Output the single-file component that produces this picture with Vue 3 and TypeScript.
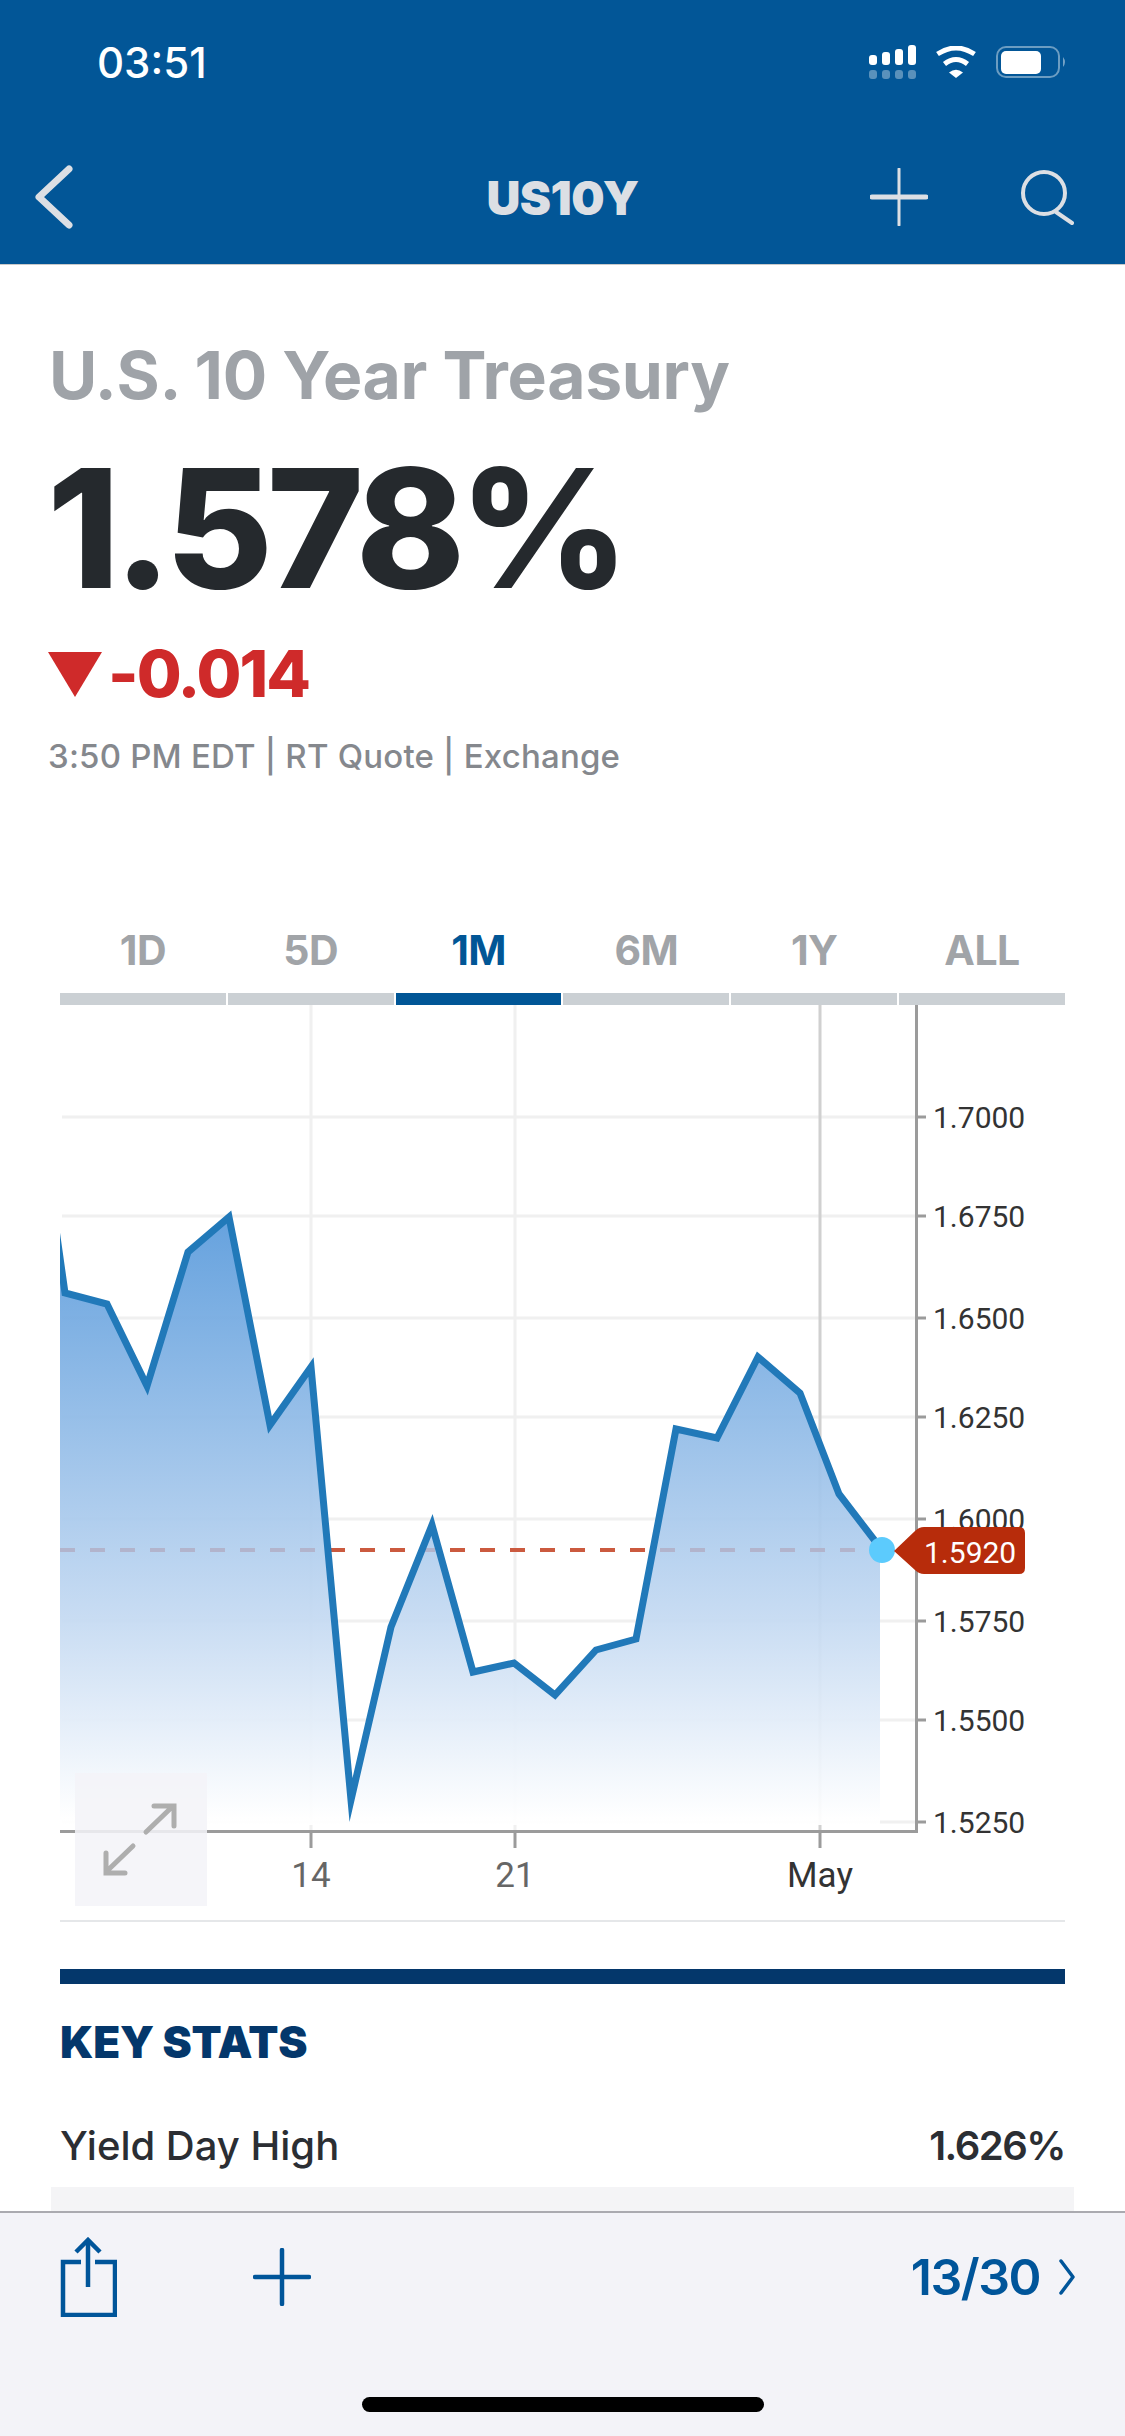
<template>
  <div class="screen">
    <header class="top">
      <div class="status">
        <span class="time">03:51</span>
        <div class="status-icons">
          <svg class="signal" width="47" height="34" viewBox="0 0 47 34">
            <rect v-for="b in signalBars" :key="b.x" :x="b.x" :y="b.y" width="8" :height="20 - b.y" rx="3" fill="#fff" />
            <rect v-for="b in signalBars" :key="'r' + b.x" :x="b.x" y="25" width="8" height="9" rx="3" fill="#fff" opacity="0.35" />
          </svg>
          <svg class="wifi" width="42" height="32" viewBox="0 0 42 32">
            <path d="M2.5 8Q21 -4 39.5 8" fill="none" stroke="#fff" stroke-width="5" />
            <path d="M9.5 18Q21 9 32.5 18" fill="none" stroke="#fff" stroke-width="5" />
            <path d="M14 26.5Q21 21 28 26.5L21 32Z" fill="#fff" />
          </svg>
          <svg class="battery" width="71" height="32" viewBox="0 0 71 32">
            <rect x="1" y="1" width="62" height="30" rx="9" fill="none" stroke="#fff" stroke-opacity="0.42" stroke-width="2" />
            <rect x="5" y="5" width="40" height="23" rx="5" fill="#fff" />
            <path d="M67 11Q71 16 67 21Z" fill="#fff" opacity="0.45" />
          </svg>
        </div>
      </div>
      <nav class="nav">
        <div class="nav-left">
          <svg width="42" height="66" viewBox="0 0 42 66">
            <path d="M36 5L6 33L36 61" fill="none" stroke="#dcdfe4" stroke-width="7" stroke-linecap="round" stroke-linejoin="round" />
          </svg>
        </div>
        <div class="symbol">US10Y</div>
        <div class="nav-right">
          <svg width="58" height="58" viewBox="0 0 58 58">
            <path d="M29 1V57" stroke="#dcdfe4" stroke-width="3" stroke-linecap="round" />
            <path d="M2 29H56" stroke="#dcdfe4" stroke-width="5" stroke-linecap="round" />
          </svg>
          <svg width="54" height="56" viewBox="0 0 54 56">
            <circle cx="24" cy="24" r="21" fill="none" stroke="#dcdfe4" stroke-width="4" />
            <path d="M36 43L52 54" stroke="#dcdfe4" stroke-width="4" stroke-linecap="round" />
          </svg>
        </div>
      </nav>
    </header>

    <main class="content">
      <section class="quote">
        <h1 class="name">U.S. 10 Year Treasury</h1>
        <div class="price">1.578%</div>
        <div class="change">
          <span class="arrow"></span>
          <span>-0.014</span>
        </div>
        <div class="meta">3:50 PM EDT | RT Quote | Exchange</div>
      </section>

      <div class="tabs">
        <div v-for="t in tabs" :key="t" class="tab" :class="{ active: t === '1M' }">{{ t }}</div>
      </div>

      <svg class="chart" width="1125" height="915" viewBox="0 1005 1125 915">
        <defs>
          <linearGradient id="area" gradientUnits="userSpaceOnUse" x1="0" y1="1217" x2="0" y2="1825">
            <stop offset="0" stop-color="#5c9cdc" />
            <stop offset="0.66" stop-color="#c5daf2" />
            <stop offset="0.99" stop-color="#ffffff" />
          </linearGradient>
          <clipPath id="areaClip"><path :d="areaPath" /></clipPath>
          <clipPath id="plotClip"><rect x="60" y="1005" width="860" height="830" /></clipPath>
        </defs>

        <line v-for="g in gridY" :key="g.label" x1="62" :y1="g.y" x2="916" :y2="g.y" stroke="#f0f0f0" stroke-width="3" />
        <line v-for="x in [311, 515]" :key="x" :x1="x" y1="1005" :x2="x" y2="1831" stroke="#f0f0f0" stroke-width="3" />
        <line x1="820" y1="1005" x2="820" y2="1831" stroke="#d0d0d0" stroke-width="3" />

        <line x1="60" y1="1550" x2="880" y2="1550" stroke="#cb5a3f" stroke-width="4" stroke-dasharray="15 15" />
        <path :d="areaPath" fill="url(#area)" fill-opacity="0.94" />
        <line x1="60" y1="1550" x2="880" y2="1550" stroke="#b2b4cc" stroke-width="4" stroke-dasharray="15 15" clip-path="url(#areaClip)" />
        <polyline :points="linePoints" fill="none" stroke="#2179b9" stroke-width="7" stroke-linejoin="miter" stroke-miterlimit="10" clip-path="url(#plotClip)" />

        <line x1="916.5" y1="1005" x2="916.5" y2="1832" stroke="#9b9b9b" stroke-width="3" />
        <line x1="60" y1="1831.5" x2="918" y2="1831.5" stroke="#9b9b9b" stroke-width="3" />
        <line v-for="g in gridY" :key="'t' + g.label" x1="916" :y1="g.y" x2="926" :y2="g.y" stroke="#9b9b9b" stroke-width="3" />
        <line v-for="x in [311, 515, 820]" :key="'v' + x" :x1="x" y1="1832" :x2="x" y2="1848" stroke="#9b9b9b" stroke-width="3" />

        <text v-for="g in gridY" :key="'l' + g.label" class="axis" x="933" :y="g.y + 11">{{ g.label }}</text>
        <text class="axis day low" x="311" y="1887" text-anchor="middle">14</text>
        <text class="axis day low" x="515" y="1887" text-anchor="middle">21</text>
        <text class="axis day" x="820" y="1887" text-anchor="middle">May</text>

        <circle cx="882" cy="1550" r="13" fill="#5ccbfd" />
        <path d="M894 1551L915 1531Q919 1527 924 1527L1019 1527Q1025 1527 1025 1533L1025 1568Q1025 1574 1019 1574L924 1574Q919 1574 915 1570Z" fill="#b72c0b" />
        <text class="axis tag" x="924" y="1563">1.5920</text>

        <rect x="75" y="1773" width="132" height="133" fill="#f3f3f8" fill-opacity="0.86" />
        <path d="M146 1832L172 1807M154 1806H174V1826M133 1846L107 1871M106 1853V1873H125" fill="none" stroke="#aeaeae" stroke-width="5" stroke-linecap="round" />
      </svg>

      <section class="stats">
        <div class="rule"></div>
        <div class="navy"></div>
        <h2 class="stats-title">KEY STATS</h2>
        <div class="stat">
          <span>Yield Day High</span>
          <span class="stat-value">1.626%</span>
        </div>
        <div class="stat-alt"></div>
      </section>
    </main>

    <footer class="bottom">
      <div class="tools">
        <svg class="share" width="58" height="80" viewBox="0 0 58 80">
          <path d="M22 25H4V78H56V25H36" fill="none" stroke="#00559a" stroke-width="4.5" />
          <path d="M29 3V50" stroke="#00559a" stroke-width="4.5" />
          <path d="M17 15L29 3L41 15" fill="none" stroke="#00559a" stroke-width="4.5" />
        </svg>
        <svg class="add" width="58" height="58" viewBox="0 0 58 58">
          <path d="M29 2V56M2 29H56" stroke="#00559a" stroke-width="4.5" stroke-linecap="round" />
        </svg>
        <div class="pager">
          <span>13/30</span>
          <svg width="16" height="36" viewBox="0 0 16 36">
            <path d="M2 2L14 18L2 34" fill="none" stroke="#00559a" stroke-width="3.5" stroke-linecap="round" stroke-linejoin="round" />
          </svg>
        </div>
      </div>
      <div class="home"></div>
    </footer>
  </div>
</template>

<script setup lang="ts">
import { computed } from 'vue';

const signalBars = [
  { x: 0, y: 10 },
  { x: 13, y: 7 },
  { x: 26, y: 4 },
  { x: 39, y: 0 },
];

const tabs = ['1D', '5D', '1M', '6M', '1Y', 'ALL'];

const gridY = [
  { label: '1.7000', y: 1117 },
  { label: '1.6750', y: 1216 },
  { label: '1.6500', y: 1318 },
  { label: '1.6250', y: 1417 },
  { label: '1.6000', y: 1519 },
  { label: '1.5750', y: 1621 },
  { label: '1.5500', y: 1720 },
  { label: '1.5250', y: 1822 },
];

// page coordinates of the yield line
const points: [number, number][] = [
  [56.5, 1233], [65, 1293], [107, 1304], [147, 1386], [188, 1252], [229, 1217],
  [270, 1425], [311, 1367], [351, 1800], [391, 1627], [432, 1525], [473, 1672],
  [514, 1663], [555, 1695], [596, 1650], [636, 1639], [676, 1429], [717, 1438],
  [758, 1357], [800, 1393], [839, 1494], [882, 1550],
];

const linePoints = computed(() => points.map((p) => p.join(',')).join(' '));

const areaPath = computed(() => {
  const inner = points.slice(1, -1).map((p) => `L${p[0]} ${p[1]}`).join('');
  return `M60 1257${inner}L880 1547L880 1825L60 1825Z`;
});
</script>

<style>
html,
body {
  margin: 0;
  background: #fff;
}
</style>

<style scoped>
.screen {
  width: 1125px;
  height: 2436px;
  display: flex;
  flex-direction: column;
  overflow: hidden;
  background: #fff;
  font-family: Inter, "Open Sans", sans-serif;
}

.top {
  height: 265px;
  flex: none;
  box-sizing: border-box;
  background: #025697;
  border-bottom: 1px solid #c9c9c9;
}

.status {
  height: 124px;
  box-sizing: border-box;
  padding: 0 58px 0 97px;
  display: flex;
  align-items: center;
  justify-content: space-between;
}

.time {
  font-weight: 500;
  font-size: 42px;
  color: #fff;
}

.status-icons {
  display: flex;
  align-items: center;
  gap: 19px;
}

.nav {
  height: 134px;
  margin-top: 6px;
  display: grid;
  grid-template-columns: 1fr auto 1fr;
  align-items: center;
}

.nav-left {
  padding-left: 33px;
  display: flex;
}

.symbol {
  font-weight: 900;
  font-size: 47px;
  letter-spacing: -0.5px;
  color: #dcdfe4;
}

.nav-right {
  display: flex;
  justify-content: flex-end;
  align-items: center;
  gap: 92px;
  padding-right: 51px;
}

.content {
  flex: 1;
  min-height: 0;
  overflow: hidden;
}

.quote {
  height: 654px;
  box-sizing: border-box;
  padding: 70px 50px 0;
}

.name {
  margin: 0 0 0 -1px;
  font-size: 66px;
  line-height: 80px;
  font-weight: 700;
  letter-spacing: -0.3px;
  color: #9fa3a8;
}

.price {
  margin: 27.5px 0 0 -3px;
  font-size: 165px;
  line-height: 170px;
  font-weight: 800;
  letter-spacing: -6px;
  color: #25292d;
}

.change {
  margin: 21.5px 0 0 -2px;
  display: flex;
  align-items: center;
  gap: 6px;
  font-size: 65px;
  line-height: 80px;
  font-weight: 800;
  letter-spacing: -2px;
  color: #cf2a2a;
}

.arrow {
  width: 0;
  height: 0;
  border-left: 27px solid transparent;
  border-right: 27px solid transparent;
  border-top: 45px solid #cf2a2a;
}

.meta {
  margin: 20px 0 0 -2px;
  font-size: 33px;
  line-height: 44px;
  font-weight: 500;
  letter-spacing: 0.2px;
  color: #85888d;
}

.tabs {
  margin: 0 60px;
  height: 86px;
  display: flex;
  gap: 2px;
}

.tab {
  flex: 1;
  box-sizing: border-box;
  border-bottom: 12px solid #cbd0d4;
  text-align: center;
  font-size: 41px;
  line-height: 62px;
  font-weight: 700;
  letter-spacing: -0.5px;
  color: #a1a4a8;
}

.tab.active {
  border-bottom-color: #015696;
  color: #015696;
}

.chart {
  display: block;
}

.axis {
  font-family: Roboto, sans-serif;
  font-size: 30px;
  fill: #333;
}

.axis.day {
  font-size: 35px;
}

.axis.low {
  fill: #666;
}

.axis.tag {
  fill: #fff;
}

.stats {
  padding: 0 60px;
}

.rule {
  height: 2px;
  background: #e5e7e9;
}

.navy {
  margin-top: 47px;
  height: 15px;
  background: #04376b;
}

.stats-title {
  margin: 28px 0 0;
  font-size: 44px;
  line-height: 60px;
  font-weight: 900;
  letter-spacing: -0.2px;
  color: #04376b;
}

.stat {
  margin-top: 43px;
  height: 60px;
  display: flex;
  align-items: center;
  justify-content: space-between;
  font-size: 40px;
  font-weight: 500;
  color: #2b2e33;
}

.stat-value {
  font-weight: 600;
  letter-spacing: -1.5px;
}

.stat-alt {
  margin: 12px -9px 0;
  height: 60px;
  background: #f4f4f6;
}

.bottom {
  position: relative;
  height: 225px;
  flex: none;
  box-sizing: border-box;
  border-top: 2px solid #aaaab0;
  background: #f3f3f8;
}

.tools {
  height: 103px;
  padding: 24px 50px 0 59px;
  display: flex;
  align-items: flex-start;
}

.add {
  margin-left: 136px;
  margin-top: 11px;
}

.pager {
  margin-left: auto;
  padding-top: 10px;
  display: flex;
  align-items: center;
  gap: 19px;
  font-size: 50px;
  line-height: 60px;
  font-weight: 600;
  letter-spacing: -1.5px;
  color: #00559a;
}

.home {
  position: absolute;
  left: 362px;
  top: 184px;
  width: 402px;
  height: 15px;
  border-radius: 8px;
  background: #000;
}
</style>
